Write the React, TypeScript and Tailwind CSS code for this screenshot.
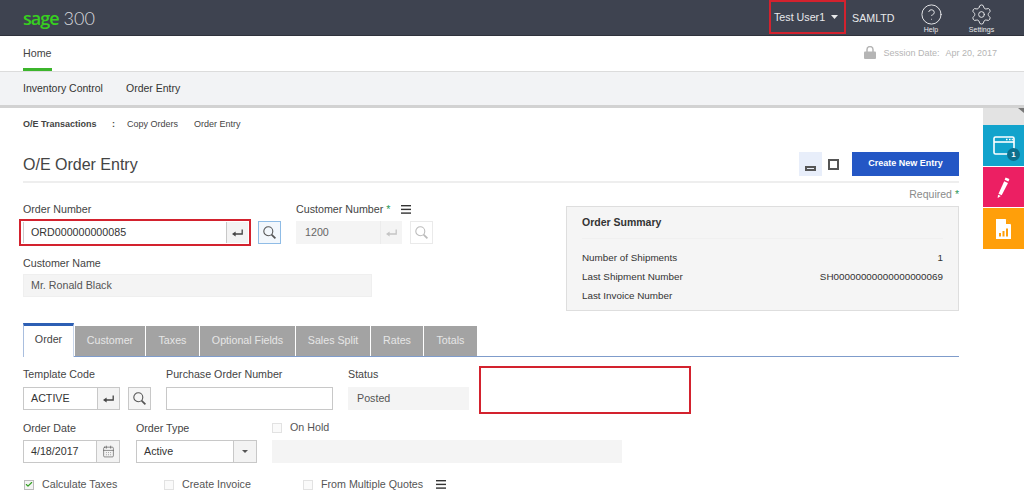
import { CalendarDays, Check, CircleHelp, Settings } from 'lucide-react'

const TABS = [
  { label: 'Customer', width: 'w-[70px]' },
  { label: 'Taxes', width: 'w-[53px]' },
  { label: 'Optional Fields', width: 'w-[95px]' },
  { label: 'Sales Split', width: 'w-[74px]' },
  { label: 'Rates', width: 'w-[52px]' },
  { label: 'Totals', width: 'w-[53px]' },
]

function Label({ children, className = '' }: { children: React.ReactNode; className?: string }) {
  return <div className={`h-[13px] text-[10.7px] leading-[13px] text-[#444] ${className}`}>{children}</div>
}

function MenuIcon({ className = '' }: { className?: string }) {
  return (
    <svg className={className} width="10" height="9" viewBox="0 0 10 9" fill="#333">
      <rect width="10" height="1.4" />
      <rect y="3.7" width="10" height="1.4" />
      <rect y="7.4" width="10" height="1.4" />
    </svg>
  )
}

function EnterButton({ disabled = false }: { disabled?: boolean }) {
  const color = disabled ? '#c4c4c4' : '#444'
  return (
    <span className={`flex w-[22px] shrink-0 items-center justify-center self-stretch border-l ${disabled ? 'border-[#ececec]' : 'border-[#c8c8c8] bg-[#f3f3f3]'}`}>
      <svg width="11" height="8" viewBox="0 0 11 8">
        <path d="M10.2 0.5V5H3" fill="none" stroke={color} strokeWidth="1.3" />
        <path d="M0 5l3.6-2.6v5.2z" fill={color} />
      </svg>
    </span>
  )
}

function SearchButton({ className = '', color = 'text-[#555]' }: { className?: string; color?: string }) {
  return (
    <span className={`flex h-[23px] w-[23px] shrink-0 items-center justify-center border ${color} ${className}`}>
      <svg width="13" height="13" viewBox="0 0 13 13" fill="none" stroke="currentColor">
        <circle cx="5.3" cy="5.3" r="4.5" strokeWidth="1.1" />
        <path d="M8.6 8.6L12.4 12.4" strokeWidth="1.7" />
      </svg>
    </span>
  )
}

function CheckRow({ label, checked = false, className = '' }: { label: string; checked?: boolean; className?: string }) {
  return (
    <div className={`flex items-center ${className}`}>
      <span className={`flex h-[10px] w-[10px] items-center justify-center border ${checked ? 'border-[#bbb] bg-[#f3f3f3] text-[#35a024]' : 'border-[#e2e2e2] bg-[#fafafa]'}`}>
        {checked && <Check size={9} strokeWidth={3.5} />}
      </span>
      <span className="ml-2 text-[10.7px] leading-[13px] text-[#555]">{label}</span>
    </div>
  )
}

export default function App() {
  return (
    <div className="h-[496px] w-[1024px] overflow-hidden bg-white font-['Liberation_Sans',Arial,sans-serif]">
      {/* Header */}
      <div className="flex h-[36px] items-center border-b border-[#2f323c] bg-[#3e4350] pl-[23px]">
        <span className="font-['Open_Sans',sans-serif] text-[18px] leading-none font-semibold tracking-[-1px] text-[#37d01f]">sage</span>
        <span className="ml-[5px] font-['Lato',sans-serif] text-[18px] leading-none font-light text-[#d8dade]">300</span>
        <div className="ml-auto flex h-full items-start">
          <div className="flex h-[34px] w-[77px] items-center border-2 border-[#d3222e] pl-[3px] text-[10.7px] text-[#e8e9eb]">
            Test User1
            <svg className="ml-[6px]" width="7" height="4" viewBox="0 0 7 4"><path d="M0 0h7L3.5 4z" fill="#e8e9eb" /></svg>
          </div>
          <span className="mt-[12px] ml-[6px] w-[49px] text-[10.7px] leading-[13px] text-[#e8e9eb]">SAMLTD</span>
          <div className="ml-[10px] flex w-[40px] flex-col items-center pt-[3px] text-[#e8e9eb]">
            <CircleHelp size={23} strokeWidth={1} />
            <span className="text-[7px] leading-[8px]">Help</span>
          </div>
          <div className="mr-[22px] ml-[10px] flex w-[41px] flex-col items-center pt-[3px] text-[#e8e9eb]">
            <Settings size={23} strokeWidth={1} />
            <span className="text-[7px] leading-[8px]">Settings</span>
          </div>
        </div>
      </div>

      {/* Home bar */}
      <div className="flex h-[36px] items-stretch border-b border-[#dcdcdc] px-[23px]">
        <div className="flex flex-col justify-between">
          <span className="mt-[11px] text-[10.7px] leading-[13px] text-[#444]">Home</span>
          <span className="h-[3px] bg-[#3cb52c]" />
        </div>
        <div className="ml-auto flex items-center pr-[4px] text-[9px] text-[#b5b5b5]">
          <svg className="mb-[3px]" width="12" height="13" viewBox="0 0 12 13">
            <path d="M3 6V3.6a3 3 0 0 1 6 0V6" fill="none" stroke="#b5b5b5" strokeWidth="1.5" />
            <rect y="5.5" width="12" height="7.5" rx="1" fill="#b5b5b5" />
          </svg>
          <span className="ml-[7px]">Session Date:</span>
          <span className="ml-[6px]">Apr 20, 2017</span>
        </div>
      </div>

      {/* Module nav */}
      <div className="flex h-[36px] items-center gap-[23px] border-b-[3px] border-[#d2d2d2] bg-[#f2f3f5] pl-[23px] text-[10.5px] text-[#333]">
        <span>Inventory Control</span>
        <span>Order Entry</span>
      </div>

      <div className="flex">
        <div className="w-[983px] pr-[24px] pl-[23px]">
          {/* Breadcrumb */}
          <div className="flex h-[32px] items-center pt-[1px] text-[9px] text-[#444]">
            <span className="w-[76px] font-bold">O/E Transactions</span>
            <span className="w-[28px] pl-[13px] font-bold">:</span>
            <span className="w-[67px]">Copy Orders</span>
            <span>Order Entry</span>
          </div>

          {/* Title row */}
          <div className="flex h-[43px] items-start border-b-2 border-[#eeeeee] pt-[12px]">
            <h1 className="mt-[3px] text-[16px] leading-[20px] text-[#444]">O/E Order Entry</h1>
            <span className="ml-auto flex h-[24px] w-[23px] items-end justify-center bg-[#e8eefa] pb-[5px]">
              <span className="h-[5px] w-[11px] border-2 border-[#555]" />
            </span>
            <span className="mt-[7px] ml-[6px] h-[11px] w-[11px] border-2 border-[#555]" />
            <span className="ml-[13px] flex h-[24px] w-[107px] items-center justify-center bg-[#2457c5] text-[9px] font-bold text-white">Create New Entry</span>
          </div>

          {/* Upper form */}
          <div className="flex">
            <div className="w-[543px] pt-[20px]">
              <Label>Order Number</Label>
              <div className="mt-[3px] flex items-center">
                <div className="-ml-[4px] w-[232px] border-2 border-[#d3222e] p-[1px] pl-[2px]">
                  <div className="flex h-[21px] items-center border-l border-[#ccc] pl-[7px] text-[10.7px] text-[#333]">
                    <span className="flex-1">ORD000000000085</span>
                    <EnterButton />
                  </div>
                </div>
                <SearchButton className="ml-[7px] border-[#8fbce6] bg-[#f2f7fc]" />
                <div className="relative ml-[15px] flex items-center">
                  <Label className="absolute -top-[18px] left-0 flex items-center whitespace-nowrap">
                    Customer Number <span className="ml-[3px] text-[#2a9a5a]">*</span>
                    <MenuIcon className="ml-[11px]" />
                  </Label>
                  <div className="flex h-[23px] w-[106px] items-center bg-[#f4f4f4] pl-[9px] text-[10.7px] text-[#666]">
                    <span className="flex-1">1200</span>
                    <EnterButton disabled />
                  </div>
                  <SearchButton className="ml-[8px] border-[#eaeaea]" color="text-[#bbb]" />
                </div>
              </div>
              <Label className="mt-[11px]">Customer Name</Label>
              <div className="mt-[4px] flex h-[23px] w-[349px] items-center border border-[#efefef] bg-[#f4f4f4] pl-[7px] text-[10.7px] text-[#555]">Mr. Ronald Black</div>
            </div>
            <div className="w-[393px]">
              <div className="flex h-[23px] items-center justify-end text-[10.5px] text-[#8a8a8a]">
                Required <span className="ml-[3px] text-[#2a9a5a]">*</span>
              </div>
              <div className="h-[105px] border border-[#dedede] bg-[#f5f5f5] px-[15px] text-[9.85px] text-[#333]">
                <div className="h-[32px] border-b border-[#f0f0f0] pt-[9px] text-[10.5px] leading-[13px] font-bold">Order Summary</div>
                <div className="mt-[10px] flex h-[19px] items-center justify-between"><span>Number of Shipments</span><span>1</span></div>
                <div className="flex h-[19px] items-center justify-between"><span>Last Shipment Number</span><span>SH00000000000000000069</span></div>
                <div className="flex h-[19px] items-center"><span>Last Invoice Number</span></div>
              </div>
            </div>
          </div>

          {/* Tabs */}
          <div className="mt-[12px] flex h-[34px] items-stretch border-b border-[#7f9ccb]">
            <div className="-mb-px w-[51px] border-t-[3px] border-r border-l border-t-[#2d5fb4] border-r-[#c9d6ea] border-l-[#a9bede] bg-white pt-[5px] text-center text-[10.7px] text-[#444]">Order</div>
            {TABS.map(tab => (
              <div key={tab.label} className={`mt-[3px] ml-px flex items-center justify-center bg-[#a3a3a3] pb-[2px] text-[10.7px] text-[#e6e6e6] ${tab.width}`}>{tab.label}</div>
            ))}
          </div>

          {/* Row 1 */}
          <div className="mt-[11px] flex items-start">
            <div className="w-[143px]">
              <Label>Template Code</Label>
              <div className="mt-[6px] flex">
                <div className="flex h-[23px] w-[97px] items-center border border-[#c8c8c8] pl-[7px] text-[10.7px] text-[#333]">
                  <span className="flex-1">ACTIVE</span>
                  <EnterButton />
                </div>
                <SearchButton className="ml-[8px] border-[#c8c8c8] bg-[#f5f5f5]" />
              </div>
            </div>
            <div className="w-[182px]">
              <Label>Purchase Order Number</Label>
              <div className="mt-[6px] h-[23px] w-[167px] border border-[#c8c8c8]" />
            </div>
            <div className="w-[131px]">
              <Label>Status</Label>
              <div className="mt-[6px] flex h-[23px] w-[121px] items-center bg-[#f4f4f4] pl-[9px] text-[10.7px] text-[#555]">Posted</div>
            </div>
            <div className="-mt-[2px] -mb-[10px] h-[48px] w-[212px] border-2 border-[#d3222e]" />
          </div>

          {/* Row 2 */}
          <div className="mt-[12px] flex items-start">
            <div className="w-[113px]">
              <Label>Order Date</Label>
              <div className="mt-[5px] flex h-[23px] w-[97px] items-center border border-[#c8c8c8] pl-[7px] text-[10.7px] text-[#333]">
                <span className="flex-1">4/18/2017</span>
                <span className="flex h-full w-[23px] items-center justify-center border-l border-[#c8c8c8] bg-[#f3f3f3] text-[#555]">
                  <CalendarDays size={13} strokeWidth={1.2} />
                </span>
              </div>
            </div>
            <div className="w-[136px]">
              <Label>Order Type</Label>
              <div className="mt-[5px] flex h-[23px] w-[121px] items-center border border-[#c8c8c8] pl-[7px] text-[10.7px] text-[#333]">
                <span className="flex-1">Active</span>
                <span className="flex h-full w-[23px] items-center justify-center border-l border-[#c8c8c8] bg-[#f3f3f3]">
                  <svg width="6" height="3" viewBox="0 0 6 3"><path d="M0 0h6L3 3z" fill="#555" /></svg>
                </span>
              </div>
            </div>
            <div>
              <CheckRow label="On Hold" className="-mt-[1px] h-[13px]" />
              <div className="mt-[6px] h-[23px] w-[350px] bg-[#f4f4f4]" />
            </div>
          </div>

          {/* Row 3 */}
          <div className="mt-[15px] flex h-[13px] items-center">
            <CheckRow label="Calculate Taxes" checked className="ml-px w-[140px]" />
            <CheckRow label="Create Invoice" className="w-[139px]" />
            <CheckRow label="From Multiple Quotes" />
            <MenuIcon className="ml-[13px]" />
          </div>
        </div>

        {/* Right rail */}
        <div className="w-[41px]">
          <div className="flex h-[17px] justify-end bg-[#e3e3e3]">
            <svg width="6" height="5" viewBox="0 0 6 5"><path d="M0 0h6v5z" fill="#777" /></svg>
          </div>
          <div className="relative flex h-[41px] items-center justify-center bg-[#12a3cc] text-white">
            <svg width="22" height="20" viewBox="0 0 22 20" fill="none" stroke="currentColor" strokeWidth="1.6">
              <rect x="1" y="1" width="20" height="17" rx="1.5" />
              <path d="M1 6h20" />
              <path d="M13 3.5h1.5M16 3.5h1.5M18.7 3.5h1.2" />
            </svg>
            <span className="absolute top-[23px] left-[24px] flex h-[13px] w-[13px] items-center justify-center rounded-full bg-[#0d6f8c] text-[8px] font-bold">1</span>
          </div>
          <div className="mt-px flex h-[40px] items-center justify-center bg-[#ec1f63]">
            <svg width="13" height="21" viewBox="0 0 13 21" fill="white">
              <path d="M8.6 0.4l3.8 1.7-1 2.4-3.8-1.7z" />
              <path d="M7.2 4.2l3.8 1.7-6.3 12.4-3.2-1.5z" />
              <path d="M1 17.7l2.9 1.3L0.6 20.9z" />
            </svg>
          </div>
          <div className="mt-px flex h-[41px] items-center justify-center bg-[#ff9f0a]">
            <svg width="15" height="20" viewBox="0 0 15 20">
              <path d="M0 0h9.5L15 5.5V20H0z" fill="white" />
              <path d="M10 0l5 5h-5z" fill="#ff9f0a" />
              <path d="M3 14h2v3.5H3zM6.5 12h2v5.5h-2zM10 9.5h2v8h-2z" fill="#ff9f0a" />
            </svg>
          </div>
        </div>
      </div>
    </div>
  )
}
